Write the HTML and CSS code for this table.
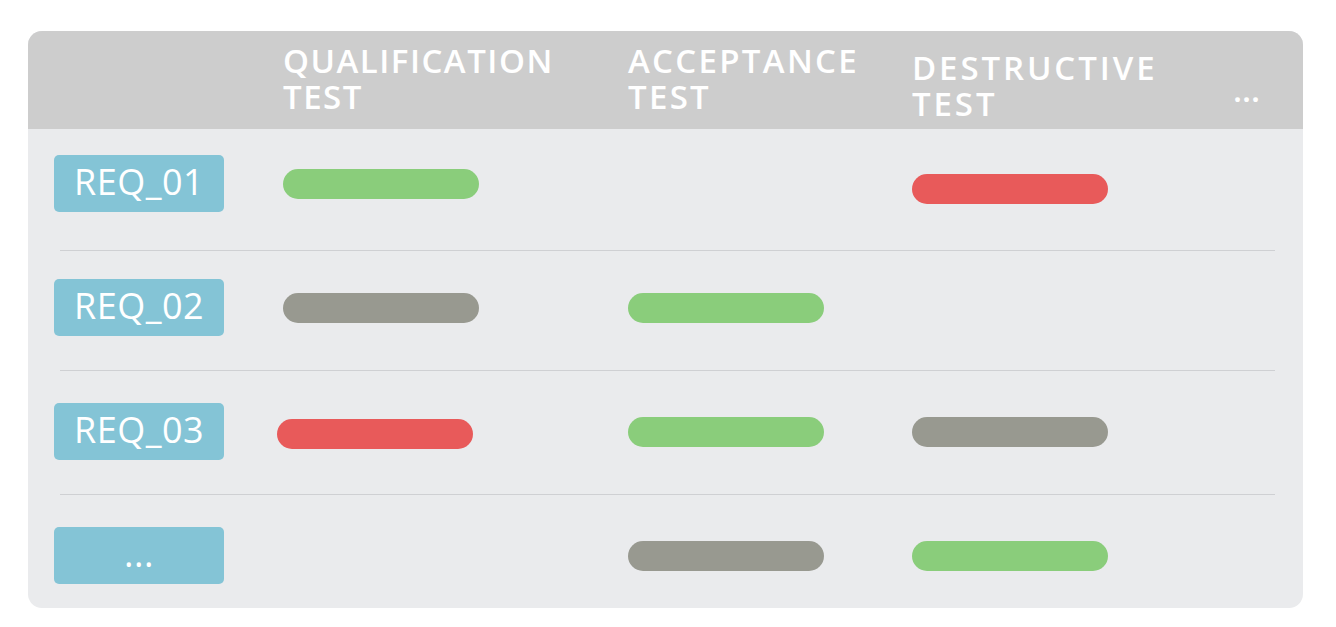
FILE: index.html
```html
<!DOCTYPE html>
<html lang="en">
<head>
<meta charset="utf-8">
<title>Test matrix</title>
<link rel="stylesheet" href="styles.css">
</head>
<body>
<div class="matrix">
  <div class="head">
    <div class="hcell"></div>
    <div class="hcell">QUALIFICATION<br>TEST</div>
    <div class="hcell hcell--wide">ACCEPTANCE<br>TEST</div>
    <div class="hcell hcell--low">DESTRUCTIVE<br>TEST</div>
    <div class="hcell hcell--more">...</div>
  </div>

  <div class="row row--first">
    <div class="req">REQ_01</div>
    <div class="cell"><span class="bar bar--pass"></span></div>
    <div class="cell"></div>
    <div class="cell"><span class="bar bar--fail nudge-down"></span></div>
  </div>
  <div class="divider"></div>

  <div class="row row--second">
    <div class="req">REQ_02</div>
    <div class="cell"><span class="bar bar--idle"></span></div>
    <div class="cell"><span class="bar bar--pass"></span></div>
    <div class="cell"></div>
  </div>
  <div class="divider"></div>

  <div class="row">
    <div class="req">REQ_03</div>
    <div class="cell"><span class="bar bar--fail nudge-left"></span></div>
    <div class="cell"><span class="bar bar--pass"></span></div>
    <div class="cell"><span class="bar bar--idle"></span></div>
  </div>
  <div class="divider"></div>

  <div class="row row--last">
    <div class="req">...</div>
    <div class="cell"></div>
    <div class="cell"><span class="bar bar--idle"></span></div>
    <div class="cell"><span class="bar bar--pass"></span></div>
  </div>
</div>
</body>
</html>
```
FILE: styles.css
```css
* { box-sizing: border-box; }

body {
  margin: 0;
  background: #ffffff;
  font-family: "Open Sans", "DejaVu Sans", sans-serif;
}

.matrix {
  margin: 31px 0 0 28px;
  width: 1275px;
  background: #eaebed;
  border-radius: 14px;
  overflow: hidden;
}

.head {
  display: grid;
  grid-template-columns: 229px 345px 284px 321px 1fr;
  align-items: start;
  height: 98px;
  padding: 12px 0 0 26px;
  background: #cdcdcd;
  color: #ffffff;
  font-size: 33px;
  font-weight: 600;
  line-height: 36px;
  letter-spacing: 1.5px;
}

.hcell--wide { letter-spacing: 2.3px; }
.hcell--low { margin-top: 7px; letter-spacing: 2.9px; }
.hcell--more { margin-top: 29px; letter-spacing: 0; }

.row {
  display: grid;
  grid-template-columns: 229px 345px 284px 1fr;
  align-items: center;
  padding: 32px 0 34px 26px;
}
.row--first { padding-top: 26px; padding-bottom: 38px; }
.row--second { padding-top: 28px; }
.row--last { padding-bottom: 24px; }

.divider {
  height: 1px;
  margin: 0 28px 0 32px;
  background: #cfd0d3;
}

.req {
  width: 170px;
  height: 57px;
  border-radius: 5px;
  background: #84c4d6;
  color: #ffffff;
  font-size: 36px;
  font-weight: 400;
  line-height: 54px;
  letter-spacing: 0.5px;
  text-align: center;
}

.cell {
  display: flex;
  align-items: center;
  height: 57px;
}

.bar {
  display: block;
  width: 196px;
  height: 30px;
  border-radius: 15px;
}
.bar--pass { background: #8acd7b; }
.bar--fail { background: #e85a5a; }
.bar--idle { background: #989990; }

.nudge-down { margin-top: 10px; }
.nudge-left { margin-left: -6px; margin-top: 5px; }
```
